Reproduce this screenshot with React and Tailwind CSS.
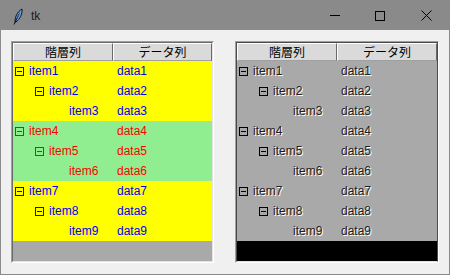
import React from "react";

const rows = [
  { level: 0, name: "item1", data: "data1", bg: "yellow", open: true },
  { level: 1, name: "item2", data: "data2", bg: "yellow", open: true },
  { level: 2, name: "item3", data: "data3", bg: "yellow" },
  { level: 0, name: "item4", data: "data4", bg: "green", open: true },
  { level: 1, name: "item5", data: "data5", bg: "green", open: true },
  { level: 2, name: "item6", data: "data6", bg: "green" },
  { level: 0, name: "item7", data: "data7", bg: "yellow", open: true },
  { level: 1, name: "item8", data: "data8", bg: "yellow", open: true },
  { level: 2, name: "item9", data: "data9", bg: "yellow" },
];

const indents = ["pl-[2px]", "pl-[22px]", "pl-[42px]"];

function MinusBox({ color }) {
  return (
    <svg width="9" height="9" viewBox="0 0 9 9" className="shrink-0">
      <rect x="0.5" y="0.5" width="8" height="8" fill="none" stroke={color} strokeWidth="1" />
      <line x1="2" y1="4.5" x2="7" y2="4.5" stroke={color} strokeWidth="1" />
    </svg>
  );
}

function Header() {
  return (
    <div className="flex h-[18px] text-[12px] text-black">
      <div className="w-[100px] flex items-center justify-center bg-[#dadada] border-t border-l border-white border-b border-r border-b-[#a0a0a0] border-r-[#696969] font-['Noto_Sans_CJK_JP',sans-serif] leading-none">
        階層列
      </div>
      <div className="flex-1 flex items-center justify-center bg-[#dadada] border-t border-l border-white border-b border-r border-b-[#a0a0a0] border-r-[#696969] font-['Noto_Sans_CJK_JP',sans-serif] leading-none">
        データ列
      </div>
    </div>
  );
}

function Tree({ disabled }) {
  return (
    <div
      className={
        disabled
          ? "w-[204px] h-[222px] border border-t-[#a0a0a0] border-l-[#a0a0a0] border-b-white border-r-white"
          : "w-[203px] h-[222px] border border-t-[#a0a0a0] border-l-[#a0a0a0] border-b-white border-r-white"
      }
    >
      <div
        className={
          disabled
            ? "w-full h-full flex flex-col border border-[#4a4a4a] border-b-[#e3e3e3]"
            : "w-full h-full flex flex-col border border-t-[#696969] border-l-[#696969] border-b-[#e3e3e3] border-r-[#e3e3e3]"
        }
      >
        <Header />
        {rows.map((r) => {
          let bg, box;
          if (disabled) {
            bg = "bg-[#a9a9a9] text-[#1e1e1e] [text-shadow:1px_1px_0_#ffffff]";
            box = "#000000";
          } else if (r.bg === "yellow") {
            bg = "bg-[#ffff00] text-[#0000ff]";
            box = "#0000ff";
          } else {
            bg = "bg-[#90ee90] text-[#ff0000]";
            box = "#ff0000";
          }
          return (
            <div key={r.name} className={`flex h-[20px] items-center ${bg} text-[12px] font-['Liberation_Sans',Arial,sans-serif] leading-none`}>
              <div className={`w-[100px] flex items-center ${indents[r.level]}`}>
                {r.open ? <MinusBox color={box} /> : <span className="w-[9px] shrink-0" />}
                <span className="ml-[5px]">{r.name}</span>
              </div>
              <div className="flex-1 pl-[4px]">{r.data}</div>
            </div>
          );
        })}
        <div className={disabled ? "flex-1 bg-black" : "flex-1 bg-[#a9a9a9]"} />
      </div>
    </div>
  );
}

function Feather() {
  return (
    <svg width="10" height="17" viewBox="0 0 10 17">
      <path d="M2 14 C2 9 4 4 9 1 C9.5 6 7 11 3 14 Z" fill="#6fa3e8" stroke="#111" strokeWidth="1" />
      <path d="M1 16.5 L6 6" stroke="#111" strokeWidth="1" />
      <path d="M4 11 L7 4" stroke="#2a5db0" strokeWidth="0.8" />
    </svg>
  );
}

export default function App() {
  return (
    <div className="w-[450px] h-[275px] flex flex-col border border-[#8a8a8a] bg-[#f0f0f0] overflow-hidden">
      <div className="h-[29px] bg-[#8a8a8a] flex items-center shrink-0">
        <div className="ml-[12px] mt-[1px] flex items-center">
          <Feather />
        </div>
        <span className="ml-[8px] text-[12px] text-[#1a1a1a] font-['Liberation_Sans',Arial,sans-serif]">tk</span>
        <div className="ml-auto flex items-center h-full">
          <div className="w-[46px] h-full flex items-center justify-center pl-[2px]">
            <div className="w-[10px] h-px bg-black" />
          </div>
          <div className="w-[46px] h-full flex items-center justify-center">
            <div className="w-[10px] h-[10px] border border-black" />
          </div>
          <div className="w-[46px] h-full flex items-center justify-center">
            <svg width="11" height="11" viewBox="0 0 11 11">
              <path d="M0.5 0.5 L10.5 10.5 M10.5 0.5 L0.5 10.5" stroke="#000" strokeWidth="1" />
            </svg>
          </div>
        </div>
      </div>
      <div className="flex-1 flex pt-[11px] pl-[10px] gap-[21px]">
        <Tree disabled={false} />
        <Tree disabled={true} />
      </div>
    </div>
  );
}
